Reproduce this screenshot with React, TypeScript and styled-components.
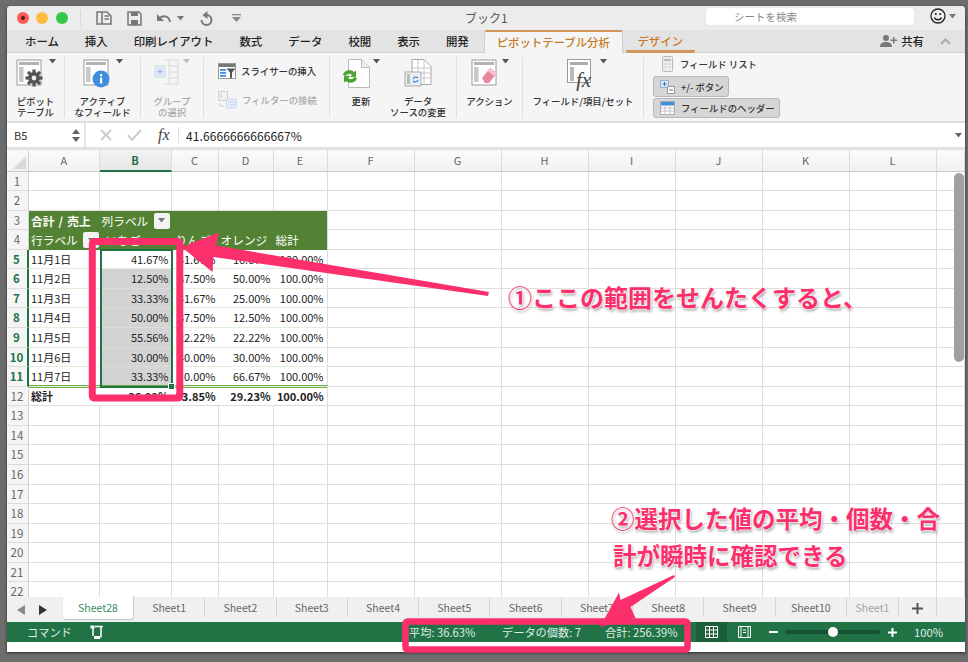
import React from "react";
import styled, { createGlobalStyle } from "styled-components";

const JP = `"Noto Sans CJK JP", "Noto Sans", sans-serif`;
const PINK = "#fb2f6c";
const GREEN = "#217346";

const GlobalStyle = createGlobalStyle`
  html, body { margin: 0; padding: 0; background: #6c6c6c; }
  body { width: 968px; height: 662px; overflow: hidden; font-family: ${JP}; }
  #root { position: relative; padding: 6px 0 0 7px; }
`;

/* ---------- small drawn icons ---------- */

const TrafficLight = styled.span<{ $c: string }>`
  width: 12px;
  height: 12px;
  border-radius: 50%;
  background: ${(p) => p.$c};
  display: flex;
  align-items: center;
  justify-content: center;
  &::after {
    content: "";
    width: 4px;
    height: 4px;
    border-radius: 50%;
    background: ${(p) => (p.$c === "#fc5b57" ? "#5c1210" : "transparent")};
  }
`;

const Caret = ({ x = 0, c = "#555" }: { x?: number; c?: string }) => (
  <svg width="7" height="5" viewBox="0 0 7 5" style={{ marginLeft: x, flex: "none" }}>
    <path d="M0 0h7L3.5 4.5z" fill={c} />
  </svg>
);

const SheetBase = ({ c = "#9a9a9a" }: { c?: string }) => (
  <>
    <rect x="1" y="1" width="24" height="25" fill="#fff" stroke={c} strokeWidth="1" />
    <rect x="3" y="3" width="20" height="3" fill={c} opacity="0.75" />
    <rect x="3" y="8" width="4.5" height="15" fill={c} opacity="0.55" />
  </>
);

const PivotIcon = () => (
  <svg width="30" height="28" viewBox="0 0 30 28">
    <SheetBase />
    <g fill="#555">
      <circle cx="18" cy="19" r="6" />
      {[0, 45, 90, 135, 180, 225, 270, 315].map((a) => (
        <rect key={a} x="16.4" y="10.5" width="3.2" height="4" transform={`rotate(${a} 18 19)`} />
      ))}
    </g>
    <circle cx="18" cy="19" r="2.4" fill="#eee" />
  </svg>
);

const InfoIcon = () => (
  <svg width="30" height="30" viewBox="0 0 30 30">
    <SheetBase />
    <circle cx="18" cy="20" r="8.5" fill="#3f8edd" />
    <rect x="17" y="18.5" width="2.2" height="6" fill="#fff" />
    <rect x="17" y="15" width="2.2" height="2.2" fill="#fff" />
  </svg>
);

const GroupIcon = () => (
  <svg width="26" height="26" viewBox="0 0 26 26" fill="none">
    <rect x="1" y="7" width="10" height="11" fill="#e4eefa" stroke="#c7d7ec" />
    <path d="M6 9.5v6M3 12.5h6" stroke="#9fc0e8" strokeWidth="1.3" />
    <path d="M11 1h4v24h-4M15 1h9v24h-9M15 7h9M15 13h9M15 19h9" stroke="#d8d8d8" />
  </svg>
);

const SlicerIcon = () => (
  <svg width="18" height="17" viewBox="0 0 18 17">
    <rect x="0.5" y="0.5" width="17" height="15" fill="#fff" stroke="#999" />
    <rect x="1" y="1" width="16" height="3" fill="#777" />
    <rect x="2" y="6" width="6" height="1.8" fill="#3f8edd" />
    <rect x="2" y="9" width="6" height="1.8" fill="#3f8edd" />
    <rect x="2" y="12" width="6" height="1.8" fill="#3f8edd" />
    <path d="M8.5 5.5h9l-3.5 4v5l-2 1.2v-6.200z" fill="#555" />
  </svg>
);

const ConnectIcon = () => (
  <svg width="19" height="18" viewBox="0 0 19 18" fill="none">
    <rect x="0.5" y="0.5" width="9" height="9" fill="#f2f2f2" stroke="#d2d2d2" />
    <rect x="2" y="2" width="2" height="5" fill="#dcdcdc" />
    <rect x="8.5" y="8" width="10" height="9" rx="1" fill="#e8f0fa" stroke="#c7d7ec" />
    <path d="M10.5 11h6M10.5 14h6" stroke="#b9cfea" />
    <path d="M2 12v3h4" stroke="#b9cfea" />
  </svg>
);

const RefreshIcon = () => (
  <svg width="28" height="29" viewBox="0 0 28 29">
    <path d="M6.5 .5h13l8 8v20h-21z" fill="#fff" stroke="#bbb" />
    <path d="M19.5 .5v8h8" fill="#eee" stroke="#bbb" />
    <path d="M1 16c1-5 8-6 11-3l2-1.5V18H8l2-2c-2-2-5-1.5-6 1z" fill="#4ea22e" />
    <path d="M15 19c-1 5-8 6-11 3l-2 1.5V17h6l-2 2c2 2 5 1.5 6-1z" fill="#4ea22e" />
  </svg>
);

const SourceIcon = () => (
  <svg width="28" height="29" viewBox="0 0 28 29" fill="none">
    <path d="M8 .5h12l7 7v18H8z" fill="#fff" stroke="#a8a8a8" />
    <path d="M8 9h19M8 14h19M8 19h19M14 1v24M20 1v24" stroke="#c8c8c8" />
    <rect x="1" y="13" width="16" height="14" fill="#ececec" stroke="#aaa" />
    <rect x="3" y="15" width="3" height="10" fill="#bbb" />
    <path d="M9 20a3 3 0 0 1 5 -1M14 21a3 3 0 0 1-5 1" stroke="#3f8edd" strokeWidth="1.3" />
  </svg>
);

const ActionIcon = () => (
  <svg width="28" height="28" viewBox="0 0 28 28">
    <SheetBase />
    <path d="M11 19l8-10 7 5-8 10h-4z" fill="#e8879b" />
    <path d="M19 9l7 5-2.5 3-7-5z" fill="#f3c3ce" />
  </svg>
);

const FxIcon = () => (
  <svg width="30" height="32" viewBox="0 0 30 32">
    <rect x="0.5" y="0.5" width="23" height="23" fill="#fff" stroke="#9a9a9a" />
    <rect x="3" y="3" width="18" height="3" fill="#aaa" />
    <rect x="3" y="8" width="4" height="14" fill="#bbb" />
    <text x="9" y="28" fontFamily="Liberation Serif, serif" fontStyle="italic" fontSize="21" fill="#444">fx</text>
  </svg>
);

const FieldListIcon = () => (
  <svg width="11" height="16" viewBox="0 0 11 16" fill="none">
    <rect x="0.5" y="0.5" width="10" height="15" rx="1" fill="#eee" stroke="#bbb" />
    <path d="M2 4h7" stroke="#888" />
    <path d="M2 8h3M6 8h3M2 11h3M6 11h3" stroke="#ccc" />
  </svg>
);

const PlusMinusIcon = () => (
  <svg width="15" height="14" viewBox="0 0 15 14" fill="none">
    <rect x="0.5" y="0.5" width="8" height="7" fill="#d8e6f6" stroke="#8fb3de" />
    <path d="M2.5 4h4M4.5 2v4" stroke="#3f76b8" />
    <rect x="7.5" y="6.5" width="7" height="7" fill="#fff" stroke="#999" />
    <path d="M9 10h4" stroke="#3f76b8" />
  </svg>
);

const HeaderFieldIcon = () => (
  <svg width="15" height="14" viewBox="0 0 15 14" fill="none">
    <rect x="0.5" y="0.5" width="14" height="13" fill="#fff" stroke="#aaa" />
    <rect x="1" y="1" width="13" height="3.5" fill="#3f8edd" />
    <path d="M1 7h13M1 10h13M5 4v10M10 4v10" stroke="#c4c4c4" />
  </svg>
);

/* ---------- annotation shapes ---------- */

const ArrowLayer = styled.svg`
  position: absolute;
  left: 0;
  top: 0;
  width: 968px;
  height: 662px;
  pointer-events: none;
  z-index: 5;
`;

const Callout = styled.div<{ $x: number; $y: number; $size: number }>`
  position: absolute;
  left: ${(p) => p.$x}px;
  top: ${(p) => p.$y}px;
  z-index: 6;
  color: ${PINK};
  font-size: ${(p) => p.$size}px;
  font-weight: 700;
  line-height: 36px;
  white-space: nowrap;
  text-shadow: 0 0 2px #fff, 0 0 2px #fff, 0 0 3px #fff, 1px 2px 3px rgba(0, 0, 0, 0.45);
`;

/* ---------- window ---------- */

const Window = styled.div`
  width: 958px;
  height: 646px;
  background: #fff;
  display: flex;
  flex-direction: column;
  box-shadow: 0 1px 3px rgba(0, 0, 0, 0.6);
  border-radius: 4px 4px 0 0;
  overflow: hidden;
`;

const TitleBar = styled.div`
  height: 24px;
  flex: none;
  background: #ececec;
  display: grid;
  grid-template-columns: 1fr 208px 51px;
  align-items: center;
  position: relative;
`;

const TitleLeft = styled.div`
  display: flex;
  align-items: center;
  padding-left: 9px;
`;

const Lights = styled.div`
  display: flex;
  gap: 7.5px;
  padding-left: 0.5px;
  padding-right: 12px;
  border-right: 1px solid #d9d9d9;
  height: 16px;
  align-items: center;
`;

const QuickIcons = styled.div`
  display: flex;
  align-items: center;
  color: #777;
  margin-left: 15px;
`;

const BookTitle = styled.div`
  position: absolute;
  left: 458px;
  top: 3px;
  font-size: 12px;
  line-height: 18px;
  color: #555;
`;

const SearchBox = styled.div`
  height: 17px;
  background: #fff;
  border-radius: 3px;
  color: #888;
  font-size: 10.5px;
  line-height: 17px;
  padding-left: 28px;
  box-shadow: 0 0 1px rgba(0, 0, 0, 0.15);
  margin-top: -4px;
`;

const Account = styled.div`
  display: flex;
  align-items: center;
  padding-left: 16px;
  gap: 3px;
  margin-top: -4px;
`;

const TabBar = styled.div`
  height: 23px;
  flex: none;
  background: #e3e3e3;
  display: flex;
  align-items: stretch;
  padding-left: 18px;
  border-bottom: 1px solid #cfcfcf;
  box-sizing: border-box;
`;

const Tab = styled.div<{ $gap: number }>`
  font-size: 11.4px;
  font-weight: 500;
  color: #222;
  line-height: 23px;
  margin-right: ${(p) => p.$gap}px;
  white-space: nowrap;
`;

const ActiveTab = styled.div`
  width: 139px;
  text-align: center;
  box-sizing: border-box;
  font-size: 11.4px;
  font-weight: 500;
  color: #c47a26;
  background: #f5f5f5;
  border-top: 2px solid #d3965a;
  border-left: 1px solid #d0d0d0;
  border-right: 1px solid #d0d0d0;
  border-radius: 3px 3px 0 0;
  line-height: 21px;
  height: 23px;
  white-space: nowrap;
`;

const ContextTab = styled.div`
  margin-left: 3px;
  width: 69px;
  text-align: center;
  font-size: 11.4px;
  font-weight: 500;
  color: #c47a26;
  line-height: 23px;
  height: 20px;
  border-bottom: 3px solid #d3965a;
  border-radius: 0 0 2px 2px;
  white-space: nowrap;
`;

const ShareArea = styled.div`
  margin-left: auto;
  padding-right: 14px;
  display: flex;
  align-items: center;
  font-size: 11.4px;
  font-weight: 500;
  color: #222;
  gap: 4px;
`;

const Ribbon = styled.div`
  height: 70px;
  flex: none;
  background: #f5f5f5;
  display: flex;
  padding: 4px 0 3px;
  box-sizing: border-box;
  border-bottom: 2px solid #dedede;
`;

const RibbonGroup = styled.div<{ $w: number; $last?: boolean; $start?: boolean }>`
  width: ${(p) => p.$w}px;
  flex: none;
  box-sizing: border-box;
  border-right: ${(p) => (p.$last ? "none" : "1px solid #e0e0e0")};
  display: flex;
  justify-content: ${(p) => (p.$start ? "flex-start" : "center")};
`;

const BigButton = styled.div<{ $w: number; $off?: boolean }>`
  width: ${(p) => p.$w}px;
  display: flex;
  flex-direction: column;
  align-items: center;
  color: ${(p) => (p.$off ? "#a9a9a9" : "#333")};
  font-size: 9.4px;
  font-weight: 500;
  line-height: 11px;
  text-align: center;
  white-space: nowrap;
`;

const BigIcon = styled.div<{ $shift?: number }>`
  height: 34px;
  box-sizing: border-box;
  display: flex;
  align-items: flex-start;
  gap: 3px;
  padding-top: 2px;
  margin-bottom: 5px;
  margin-left: ${(p) => p.$shift ?? 0}px;
`;

const SmallStack = styled.div`
  display: flex;
  flex-direction: column;
  gap: 11px;
  padding-top: 5px;
  width: 100%;
  padding-left: 14px;
`;

const SmallRow = styled.div<{ $off?: boolean }>`
  display: flex;
  align-items: center;
  gap: 5px;
  color: ${(p) => (p.$off ? "#a9a9a9" : "#333")};
  font-size: 9.4px;
  font-weight: 500;
  white-space: nowrap;
  height: 18px;
`;

const ToggleStack = styled.div`
  display: flex;
  flex-direction: column;
  align-items: flex-start;
  padding-left: 9px;
  width: 100%;
  gap: 1px;
  margin-top: -1px;
`;

const ToggleRow = styled.div`
  display: flex;
  align-items: center;
  gap: 7px;
  padding-left: 9px;
  font-size: 9.4px;
  font-weight: 500;
  color: #333;
  height: 17px;
  margin-bottom: 3px;
  white-space: nowrap;
`;

const Toggle = styled.div`
  display: flex;
  align-items: center;
  gap: 6px;
  height: 21px;
  box-sizing: border-box;
  padding: 0 4px 0 6px;
  background: #d6d6d6;
  border: 1px solid #b8b8b8;
  border-radius: 3px;
  font-size: 9.4px;
  font-weight: 500;
  color: #333;
  white-space: nowrap;
`;

const FormulaBar = styled.div`
  height: 24px;
  flex: none;
  display: flex;
  align-items: center;
  background: #fff;
  border-bottom: 3px solid #e2e2e2;
`;

const NameBox = styled.div`
  width: 79px;
  height: 24px;
  box-sizing: border-box;
  border-right: 2px solid #e4e4e4;
  padding-left: 7px;
  font-size: 11px;
  line-height: 24px;
  color: #333;
  display: flex;
  align-items: center;
  justify-content: space-between;
  padding-right: 4px;
`;

const Spin = styled.div`
  display: flex;
  flex-direction: column;
  gap: 3px;
`;

const FormulaTools = styled.div`
  width: 93px;
  height: 16px;
  border-right: 1px solid #ddd;
  display: flex;
  align-items: center;
  gap: 15px;
  padding-left: 14px;
  box-sizing: border-box;
  flex: none;
`;

const FxLabel = styled.span`
  font-family: "Liberation Serif", serif;
  font-style: italic;
  font-size: 16px;
  color: #444;
  margin-left: 1px;
`;

const FormulaText = styled.div`
  flex: 1;
  padding-left: 7px;
  font-size: 12px;
  color: #222;
  letter-spacing: 0.1px;
`;

const FormulaEnd = styled.div`
  padding-right: 3px;
  display: flex;
`;

const SheetArea = styled.div`
  flex: 1;
  min-height: 0;
  overflow: hidden;
  position: relative;
`;

const Grid = styled.div`
  display: grid;
  grid-template-columns: 22px 70.5px 72px 47px 55px 54px 87px 87px 87px 87px 87px 87px 87px 28px;
  grid-template-rows: 21.5px repeat(22, 19.57px);
`;

const Corner = styled.div`
  background: linear-gradient(#fbfbfb, #f1f1f1);
  border-right: 1px solid #d0d0d0;
  border-bottom: 1px solid #c8c8c8;
  position: relative;
  &::after {
    content: "";
    position: absolute;
    right: 2px;
    bottom: 2px;
    border-style: solid;
    border-width: 0 0 13px 13px;
    border-color: transparent transparent #d8d8d8 transparent;
  }
`;

const ColHead = styled.div<{ $on?: boolean }>`
  background: ${(p) => (p.$on ? "linear-gradient(#f2f2f2, #e6e6e6)" : "linear-gradient(#fbfbfb, #f1f1f1)")};
  border-right: 1px solid #dcdcdc;
  border-bottom: ${(p) => (p.$on ? `2px solid ${GREEN}` : "1px solid #c8c8c8")};
  text-align: center;
  font-size: 11px;
  font-weight: ${(p) => (p.$on ? 700 : 400)};
  line-height: 20px;
  color: ${(p) => (p.$on ? GREEN : "#666")};
  box-sizing: border-box;
`;

const RowHead = styled.div<{ $on?: boolean }>`
  background: #f5f5f5;
  border-right: ${(p) => (p.$on ? `2px solid ${GREEN}` : "1px solid #d0d0d0")};
  border-bottom: 1px solid #dcdcdc;
  text-align: center;
  font-size: 11.5px;
  font-weight: ${(p) => (p.$on ? 700 : 400)};
  line-height: 19px;
  color: ${(p) => (p.$on ? GREEN : "#666")};
  box-sizing: border-box;
  padding-right: 1px;
`;

const Blank = styled.div`
  border-right: 1px solid #dddddd;
  border-bottom: 1px solid #dddddd;
  box-sizing: border-box;
`;

type Tone = "body" | "total";

const PivotHead = styled.div<{ $end?: boolean; $strong?: boolean; $pad?: number }>`
  background: #548235;
  color: #fff;
  font-size: 11.7px;
  font-weight: ${(p) => (p.$strong ? 700 : 400)};
  word-spacing: 1.5px;
  line-height: 19px;
  padding-left: ${(p) => p.$pad ?? 2}px;
  white-space: nowrap;
  position: relative;
  border-right: ${(p) => (p.$end ? "1px solid #dddddd" : "none")};
  box-sizing: border-box;
`;

const PivotCell = styled.div<{ $tone: Tone; $num?: boolean; $end?: boolean; $shade?: boolean }>`
  font-size: 11px;
  font-weight: ${(p) => (p.$tone === "total" ? 700 : 400)};
  line-height: ${(p) => (p.$tone === "total" ? "17px" : "19px")};
  color: #222;
  text-align: ${(p) => (p.$num ? "right" : "left")};
  padding: 0 3px 0 2px;
  white-space: nowrap;
  background: ${(p) => (p.$shade ? "#d3d3d3" : "transparent")};
  border-bottom: 1px solid ${(p) => (p.$tone === "total" ? "#dddddd" : p.$shade ? "#dbdbdb" : "#e2efda")};
  border-right: ${(p) => (p.$end ? "1px solid #dddddd" : "none")};
  border-top: ${(p) => (p.$tone === "total" ? "3px double #70ad47" : "none")};
  margin-top: ${(p) => (p.$tone === "total" ? "-2px" : "0")};
  box-sizing: border-box;
`;

const DropButton = styled.span<{ $x: number }>`
  position: absolute;
  left: ${(p) => p.$x}px;
  top: 2px;
  width: 16px;
  height: 16px;
  background: #f3f3f3;
  border-radius: 2px;
  display: flex;
  align-items: center;
  justify-content: center;
`;

const Selection = styled.div`
  position: absolute;
  left: 92.5px;
  top: 99px;
  width: 73px;
  height: 139px;
  border: 2px solid ${GREEN};
  box-sizing: border-box;
  z-index: 2;
  &::after {
    content: "";
    position: absolute;
    right: -4px;
    bottom: -4px;
    width: 5px;
    height: 5px;
    background: ${GREEN};
    border: 1px solid #fff;
  }
`;

const ScrollThumb = styled.div`
  position: absolute;
  right: 1px;
  top: 23px;
  width: 10px;
  height: 189px;
  background: #a0a0a0;
  border-radius: 5px;
  z-index: 2;
`;

const TabsRow = styled.div`
  height: 25px;
  flex: none;
  background: #f0f0f0;
  display: flex;
  align-items: flex-start;
`;

const TabNav = styled.div`
  width: 56px;
  flex: none;
  display: flex;
  gap: 14px;
  padding: 8px 0 0 10px;
  box-sizing: border-box;
`;

const SheetTab = styled.div<{ $active?: boolean; $w?: number }>`
  width: ${(p) => p.$w ?? 71.3}px;
  flex: none;
  box-sizing: border-box;
  height: ${(p) => (p.$active ? "23px" : "20px")};
  margin-top: ${(p) => (p.$active ? "-1px" : "0")};
  padding-top: ${(p) => (p.$active ? "5px" : "4px")};
  text-align: center;
  font-size: 10.5px;
  line-height: 14px;
  color: ${(p) => (p.$active ? "#3c8a5e" : "#666")};
  background: ${(p) => (p.$active ? "#fff" : "transparent")};
  border-right: ${(p) => (p.$active ? "1px solid #cfcfcf" : "1px solid #d4d4d4")};
  border-radius: ${(p) => (p.$active ? "0 0 3px 3px" : "0")};
  box-shadow: ${(p) => (p.$active ? "0 1px 1px rgba(0,0,0,.2)" : "none")};
  overflow: hidden;
  white-space: nowrap;
`;

const FadedLabel = styled.span`
  opacity: 0.55;
`;

const AddSheet = styled.div`
  width: 38px;
  height: 20px;
  border-right: 1px solid #d4d4d4;
  box-sizing: border-box;
  display: flex;
  align-items: center;
  justify-content: center;
  padding-top: 2px;
`;

const StatusBar = styled.div`
  height: 20px;
  flex: none;
  background: ${GREEN};
  color: #dfeee6;
  font-size: 11.2px;
  line-height: 20px;
  display: flex;
  align-items: center;
  white-space: nowrap;
`;

const StatusLabel = styled.span<{ $l: number; $w: number }>`
  margin-left: ${(p) => p.$l}px;
  width: ${(p) => p.$w}px;
  flex: none;
`;

const ViewButton = styled.div<{ $on?: boolean; $l?: number }>`
  width: 31px;
  height: 20px;
  margin-left: ${(p) => p.$l ?? 0}px;
  display: flex;
  align-items: center;
  justify-content: center;
  background: ${(p) => (p.$on ? "#1c5e3a" : "transparent")};
  flex: none;
`;

const ZoomTrack = styled.div`
  width: 96px;
  height: 4px;
  border-radius: 2px;
  background: #175233;
  position: relative;
  margin: 0 6px 0 7px;
  flex: none;
`;

const ZoomThumb = styled.span`
  position: absolute;
  left: 43px;
  top: -3px;
  width: 10px;
  height: 10px;
  border-radius: 50%;
  background: #fff;
`;

const BottomStrip = styled.div`
  height: 10px;
  flex: none;
  background: #fff;
`;

const pivotRows = [
  ["11月1日", "41.67%", "41.67%", "16.67%", "100.00%"],
  ["11月2日", "12.50%", "37.50%", "50.00%", "100.00%"],
  ["11月3日", "33.33%", "41.67%", "25.00%", "100.00%"],
  ["11月4日", "50.00%", "37.50%", "12.50%", "100.00%"],
  ["11月5日", "55.56%", "22.22%", "22.22%", "100.00%"],
  ["11月6日", "30.00%", "40.00%", "30.00%", "100.00%"],
  ["11月7日", "33.33%", "0.00%", "66.67%", "100.00%"],
];
const totalRow = ["総計", "36.92%", "33.85%", "29.23%", "100.00%"];
const colNames = ["A", "B", "C", "D", "E", "F", "G", "H", "I", "J", "K", "L", ""];
const extraCols = 8;
const ribbonTabs = ["ホーム", "挿入", "印刷レイアウト", "数式", "データ", "校閲", "表示", "開発"];
const sheetNames = ["Sheet1", "Sheet2", "Sheet3", "Sheet4", "Sheet5", "Sheet6", "Sheet7", "Sheet8", "Sheet9", "Sheet10"];

const blanks = (n: number, prefix: string) =>
  Array.from({ length: n }, (_, i) => <Blank key={`${prefix}-${i}`} />);

const SheetGrid = () => (
  <Grid>
    <Corner />
    {colNames.map((c, i) => (
      <ColHead key={i} $on={c === "B"}>
        {c}
      </ColHead>
    ))}
    {[1, 2].map((r) => (
      <React.Fragment key={r}>
        <RowHead>{r}</RowHead>
        {blanks(13, `r${r}`)}
      </React.Fragment>
    ))}

    <RowHead>3</RowHead>
    <PivotHead $strong>合計 / 売上</PivotHead>
    <PivotHead>
      列ラベル
      <DropButton $x={54}>
        <Caret c="#777" />
      </DropButton>
    </PivotHead>
    <PivotHead />
    <PivotHead />
    <PivotHead $end />
    {blanks(extraCols, "r3")}

    <RowHead>4</RowHead>
    <PivotHead>
      行ラベル
      <DropButton $x={54}>
        <Caret c="#777" />
      </DropButton>
    </PivotHead>
    <PivotHead $pad={6}>いちご</PivotHead>
    <PivotHead $pad={4}>りんご</PivotHead>
    <PivotHead>オレンジ</PivotHead>
    <PivotHead $end>総計</PivotHead>
    {blanks(extraCols, "r4")}

    {pivotRows.map((row, r) => (
      <React.Fragment key={r}>
        <RowHead $on>{r + 5}</RowHead>
        {row.map((v, c) => (
          <PivotCell key={c} $tone="body" $num={c > 0} $end={c === 4} $shade={c === 1 && r > 0}>
            {v}
          </PivotCell>
        ))}
        {blanks(extraCols, `p${r}`)}
      </React.Fragment>
    ))}

    <RowHead>12</RowHead>
    {totalRow.map((v, c) => (
      <PivotCell key={c} $tone="total" $num={c > 0} $end={c === 4}>
        {v}
      </PivotCell>
    ))}
    {blanks(extraCols, "tot")}

    {Array.from({ length: 10 }, (_, i) => i + 13).map((r) => (
      <React.Fragment key={r}>
        <RowHead>{r}</RowHead>
        {blanks(13, `r${r}`)}
      </React.Fragment>
    ))}
  </Grid>
);

export default function App() {
  return (
    <>
      <GlobalStyle />
      <Window>
        <TitleBar>
          <TitleLeft>
            <Lights>
              <TrafficLight $c="#fc5b57" />
              <TrafficLight $c="#fdbc40" />
              <TrafficLight $c="#34c748" />
            </Lights>
            <QuickIcons>
              <svg width="17" height="14" viewBox="0 0 17 14" fill="none" stroke="#777" strokeWidth="1.5">
                <path d="M1 1h10l4 4v8H1zM6 1v12M8.5 5H13M8.5 8H13" />
              </svg>
              <svg style={{ marginLeft: 14 }} width="15" height="15" viewBox="0 0 15 15">
                <path d="M1 1h11l2 2v11H1z" fill="none" stroke="#777" strokeWidth="1.5" />
                <rect x="4" y="1" width="7" height="4" fill="#777" />
                <rect x="4" y="9" width="7" height="5" fill="#777" />
              </svg>
              <svg style={{ marginLeft: 14 }} width="16" height="13" viewBox="0 0 16 13" fill="none" stroke="#777" strokeWidth="2">
                <path d="M1 2v7h7z" fill="#777" stroke="none" />
                <path d="M3 7c3-4 10-4 11 3" />
              </svg>
              <Caret x={5} c="#777" />
              <svg style={{ marginLeft: 16 }} width="14" height="15" viewBox="0 0 14 15" fill="none" stroke="#777" strokeWidth="2">
                <path d="M6.500 4a5 5 0 1 1-5 5" />
                <path d="M7.500 0v8L2.500 4z" fill="#777" stroke="none" />
              </svg>
              <svg style={{ marginLeft: 18 }} width="9" height="8" viewBox="0 0 9 8">
                <rect width="9" height="1.3" fill="#888" />
                <path d="M0 3h9L4.5 8z" fill="#888" />
              </svg>
            </QuickIcons>
          </TitleLeft>
          <BookTitle>ブック1</BookTitle>
          <SearchBox>シートを検索</SearchBox>
          <Account>
            <svg width="16" height="16" viewBox="0 0 16 16" fill="none" stroke="#222" strokeWidth="1.3">
              <circle cx="8" cy="8" r="7" />
              <path d="M4.5 9.5c1 3 6 3 7 0" />
              <circle cx="5.8" cy="6" r="1" fill="#222" stroke="none" />
              <circle cx="10.2" cy="6" r="1" fill="#222" stroke="none" />
            </svg>
            <Caret c="#777" />
          </Account>
        </TitleBar>

        <TabBar>
          {ribbonTabs.map((t, i) => (
            <Tab key={t} $gap={i === ribbonTabs.length - 1 ? 15 : 26}>
              {t}
            </Tab>
          ))}
          <ActiveTab>ピボットテーブル分析</ActiveTab>
          <ContextTab>デザイン</ContextTab>
          <ShareArea>
            <svg width="17" height="12" viewBox="0 0 17 12" fill="#777">
              <circle cx="6" cy="3" r="3" />
              <path d="M0 12c0-4 3-5 6-5s6 1 6 5z" />
              <path d="M13 2h1.5v2.5H17V6h-2.5v2.5H13V6h-2.5V4.5H13z" />
            </svg>
            共有
            <svg style={{ marginLeft: 12 }} width="11" height="7" viewBox="0 0 11 7" fill="none" stroke="#aaa" strokeWidth="2">
              <path d="M1 6l4.5-4.5L10 6" />
            </svg>
          </ShareArea>
        </TabBar>

        <Ribbon>
          <RibbonGroup $w={58}>
            <BigButton $w={58}>
              <BigIcon>
                <PivotIcon />
                <Caret />
              </BigIcon>
              ピボット
              <br />
              テーブル
            </BigButton>
          </RibbonGroup>
          <RibbonGroup $w={76}>
            <BigButton $w={76}>
              <BigIcon>
                <InfoIcon />
                <Caret />
              </BigIcon>
              アクティブ
              <br />
              なフィールド
            </BigButton>
          </RibbonGroup>
          <RibbonGroup $w={63}>
            <BigButton $w={63} $off>
              <BigIcon>
                <GroupIcon />
                <Caret c="#bbb" />
              </BigIcon>
              グループ
              <br />
              の選択
            </BigButton>
          </RibbonGroup>
          <RibbonGroup $w={126}>
            <SmallStack>
              <SmallRow>
                <SlicerIcon />
                スライサーの挿入
              </SmallRow>
              <SmallRow $off>
                <ConnectIcon />
                フィルターの接続
              </SmallRow>
            </SmallStack>
          </RibbonGroup>
          <RibbonGroup $w={127} $start>
            <BigButton $w={62}>
              <BigIcon>
                <RefreshIcon />
                <Caret />
              </BigIcon>
              更新
            </BigButton>
            <BigButton $w={52}>
              <BigIcon>
                <SourceIcon />
              </BigIcon>
              データ
              <br />
              ソースの変更
            </BigButton>
          </RibbonGroup>
          <RibbonGroup $w={66}>
            <BigButton $w={66}>
              <BigIcon>
                <ActionIcon />
                <Caret />
              </BigIcon>
              アクション
            </BigButton>
          </RibbonGroup>
          <RibbonGroup $w={121}>
            <BigButton $w={121}>
              <BigIcon $shift={8}>
                <FxIcon />
                <Caret />
              </BigIcon>
              フィールド/項目/セット
            </BigButton>
          </RibbonGroup>
          <RibbonGroup $w={200} $last>
            <ToggleStack>
              <ToggleRow>
                <FieldListIcon />
                フィールド リスト
              </ToggleRow>
              <Toggle>
                <PlusMinusIcon />
                +/- ボタン
              </Toggle>
              <Toggle>
                <HeaderFieldIcon />
                フィールドのヘッダー
              </Toggle>
            </ToggleStack>
          </RibbonGroup>
        </Ribbon>

        <FormulaBar>
          <NameBox>
            B5
            <Spin>
              <svg width="8" height="5" viewBox="0 0 8 5"><path d="M0 5h8L4 0z" fill="#666" /></svg>
              <svg width="8" height="5" viewBox="0 0 8 5"><path d="M0 0h8L4 5z" fill="#666" /></svg>
            </Spin>
          </NameBox>
          <FormulaTools>
            <svg width="12" height="12" viewBox="0 0 12 12" stroke="#ccc" strokeWidth="2">
              <path d="M1 1l10 10M11 1L1 11" />
            </svg>
            <svg width="15" height="12" viewBox="0 0 15 12" fill="none" stroke="#ccc" strokeWidth="2">
              <path d="M1 6l4 5L14 1" />
            </svg>
            <FxLabel>fx</FxLabel>
          </FormulaTools>
          <FormulaText>41.6666666666667%</FormulaText>
          <FormulaEnd>
            <Caret c="#666" />
          </FormulaEnd>
        </FormulaBar>

        <SheetArea>
          <SheetGrid />
          <Selection />
          <ScrollThumb />
        </SheetArea>

        <TabsRow>
          <TabNav>
            <svg width="8" height="10" viewBox="0 0 8 10"><path d="M8 0v10L0 5z" fill="#888" /></svg>
            <svg width="8" height="10" viewBox="0 0 8 10"><path d="M0 0v10l8-5z" fill="#333" /></svg>
          </TabNav>
          <SheetTab $active $w={71}>Sheet28</SheetTab>
          {sheetNames.map((n) => (
            <SheetTab key={n}>{n}</SheetTab>
          ))}
          <SheetTab $w={52}>
            <FadedLabel>Sheet1</FadedLabel>
          </SheetTab>
          <AddSheet>
            <svg width="11" height="11" viewBox="0 0 11 11" stroke="#555" strokeWidth="2">
              <path d="M5.5 0v11M0 5.5h11" />
            </svg>
          </AddSheet>
        </TabsRow>

        <StatusBar>
          <StatusLabel $l={20} $w={63}>コマンド</StatusLabel>
          <svg width="15" height="15" viewBox="0 0 15 15" fill="none" stroke="#fff" strokeWidth="1.5">
            <rect x="0.5" y="0.5" width="4" height="3" fill="#fff" stroke="none" />
            <rect x="4" y="11" width="6" height="3" fill="#fff" stroke="none" />
            <path d="M3 3v8M5 1.5h8M11 1.5v11" />
          </svg>
          <StatusLabel $l={304} $w={93}>平均: 36.63%</StatusLabel>
          <StatusLabel $l={0} $w={103}>データの個数: 7</StatusLabel>
          <StatusLabel $l={0} $w={91}>合計: 256.39%</StatusLabel>
          <ViewButton $on>
            <svg width="13" height="12" viewBox="0 0 13 12" fill="none" stroke="#fff">
              <path d="M.5.5h12v11H.5zM.5 4h12M.5 8h12M4.5.5v11M8.5.5v11" />
            </svg>
          </ViewButton>
          <ViewButton $l={2}>
            <svg width="13" height="12" viewBox="0 0 13 12" fill="none" stroke="#fff">
              <path d="M.5.5h12v11H.5zM3 .5v11M10 .5v11M5 4h3M5 6.5h3" />
            </svg>
          </ViewButton>
          <svg style={{ marginLeft: 9, flex: "none" }} width="9" height="2" viewBox="0 0 9 2">
            <rect width="9" height="2" fill="#fff" />
          </svg>
          <ZoomTrack>
            <ZoomThumb />
          </ZoomTrack>
          <svg style={{ marginLeft: 1, flex: "none" }} width="9" height="9" viewBox="0 0 9 9" stroke="#fff" strokeWidth="2">
            <path d="M4.5 0v9M0 4.5h9" />
          </svg>
          <StatusLabel $l={17} $w={32}>100%</StatusLabel>
        </StatusBar>
        <BottomStrip />
      </Window>

      <ArrowLayer viewBox="0 0 968 662">
        <g fill={PINK}>
          <path d="M181.5 247L219 232.5L216 245.5L489 292L488 296L213.5 257L212.5 272z" />
          <path d="M674 575L620.5 600L619 592.5L600 627L635.5 618L630.5 607L675 577z" />
        </g>
        <g fill="none" stroke={PINK} strokeLinejoin="round">
          <rect x="92.3" y="241.5" width="87.5" height="156.5" rx="2" strokeWidth="7" />
          <rect x="405.5" y="621.5" width="282" height="28" rx="2" strokeWidth="6.5" />
        </g>
      </ArrowLayer>

      <Callout $x={508} $y={279} $size={24}>①ここの範囲をせんたくすると、</Callout>
      <Callout $x={611} $y={500} $size={23.5}>②選択した値の平均・個数・合</Callout>
      <Callout $x={613} $y={537} $size={23.5}>計が瞬時に確認できる</Callout>
    </>
  );
}
